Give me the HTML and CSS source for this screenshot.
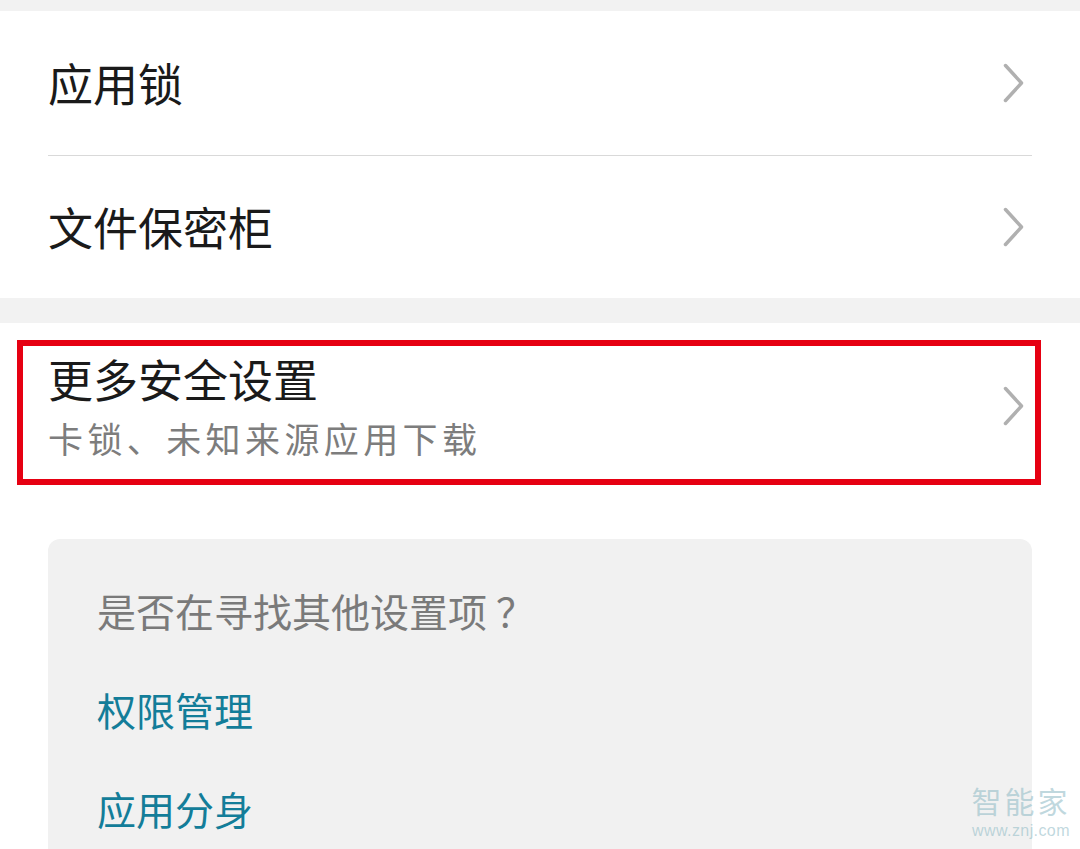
FILE: index.html
```html
<!DOCTYPE html>
<html lang="zh-CN">
<head>
<meta charset="utf-8">
<title>安全</title>
<link rel="stylesheet" href="styles.css">
</head>
<body>
<div class="page">
  <div class="band band-top"></div>
  <section class="group">
    <div class="row row-first">
      <span class="row-title">应用锁</span>
      <svg class="chev" width="24" height="40" viewBox="0 0 24 40"><path d="M3.5 2.5 L19.5 20 L3.5 37.5" fill="none" stroke="#b0b0b0" stroke-width="3.5" stroke-linecap="round" stroke-linejoin="round"/></svg>
    </div>
    <div class="row">
      <span class="row-title">文件保密柜</span>
      <svg class="chev" width="24" height="40" viewBox="0 0 24 40"><path d="M3.5 2.5 L19.5 20 L3.5 37.5" fill="none" stroke="#b0b0b0" stroke-width="3.5" stroke-linecap="round" stroke-linejoin="round"/></svg>
    </div>
  </section>
  <div class="band band-mid"></div>
  <section class="group group-2">
    <div class="highlight">
      <div class="row-two">
        <div class="texts">
          <div class="row-title">更多安全设置</div>
          <div class="row-sub">卡锁、未知来源应用下载</div>
        </div>
        <svg class="chev" width="24" height="40" viewBox="0 0 24 40"><path d="M3.5 2.5 L19.5 20 L3.5 37.5" fill="none" stroke="#b0b0b0" stroke-width="3.5" stroke-linecap="round" stroke-linejoin="round"/></svg>
      </div>
    </div>
    <div class="card">
      <div class="card-q">是否在寻找其他设置项<span class="qmark">？</span></div>
      <div class="card-link">权限管理</div>
      <div class="card-link">应用分身</div>
    </div>
  </section>
  <div class="watermark">
    <div class="wm-name">智能家</div>
    <div class="wm-url">www.znj.com</div>
  </div>
</div>
</body>
</html>
```
FILE: styles.css
```css
* { box-sizing: border-box; }
html, body { margin: 0; padding: 0; }
body {
  background: #ffffff;
  font-family: "Noto Sans CJK SC", "Noto Sans", sans-serif;
  color: #1a1a1a;
  width: 1080px;
  height: 849px;
  overflow: hidden;
}
.page {
  position: relative;
  width: 1080px;
  height: 849px;
  overflow: hidden;
}
.band { background: #f2f2f2; }
.band-top { height: 11px; }
.band-mid { height: 25px; }
.group { background: #fff; }
.row {
  display: flex;
  align-items: center;
  justify-content: space-between;
  margin: 0 48px;
  height: 143px;
}
.row-first { height: 145px; border-bottom: 1px solid #d9d9d9; }
.row + .row { height: 142px; }
.row-title {
  font-size: 45px;
  line-height: 56px;
  color: #1a1a1a;
}
.chev { display: block; margin-right: 6px; flex: none; }
.group-2 { padding-top: 17px; }
.highlight {
  margin: 0 39px 0 17px;
  border: 6px solid #e60012;
  height: 145px;
}
.row-two {
  display: flex;
  align-items: center;
  justify-content: space-between;
  padding: 5px 3px 18px 25px;
  height: 100%;
}
.row-sub {
  font-size: 35px;
  line-height: 46px;
  letter-spacing: 4.4px;
  color: #7d7d7d;
  margin-top: 8px;
}
.card {
  margin: 54px 48px 0 48px;
  background: #f1f1f1;
  border-radius: 12px 12px 0 0;
  padding: 45px 49px 60px 49px;
  display: flex;
  flex-direction: column;
  gap: 47px;
}
.card-q {
  font-size: 39px;
  line-height: 52px;
  color: #7a7a7a;
}
.qmark {
  margin-left: 9px;
}
.card-link {
  font-size: 39px;
  line-height: 52px;
  color: #137d99;
}
.watermark {
  position: absolute;
  left: 969px;
  top: 784px;
  width: 104px;
  color: rgba(150, 190, 200, 0.6);
  text-align: center;
}
.wm-name {
  font-size: 30px;
  line-height: 32px;
  letter-spacing: 3px;
}
.wm-url {
  font-family: "Liberation Sans", "Noto Sans", sans-serif;
  font-size: 16px;
  line-height: 18px;
  margin-top: 6px;
  letter-spacing: 0.4px;
}
```
